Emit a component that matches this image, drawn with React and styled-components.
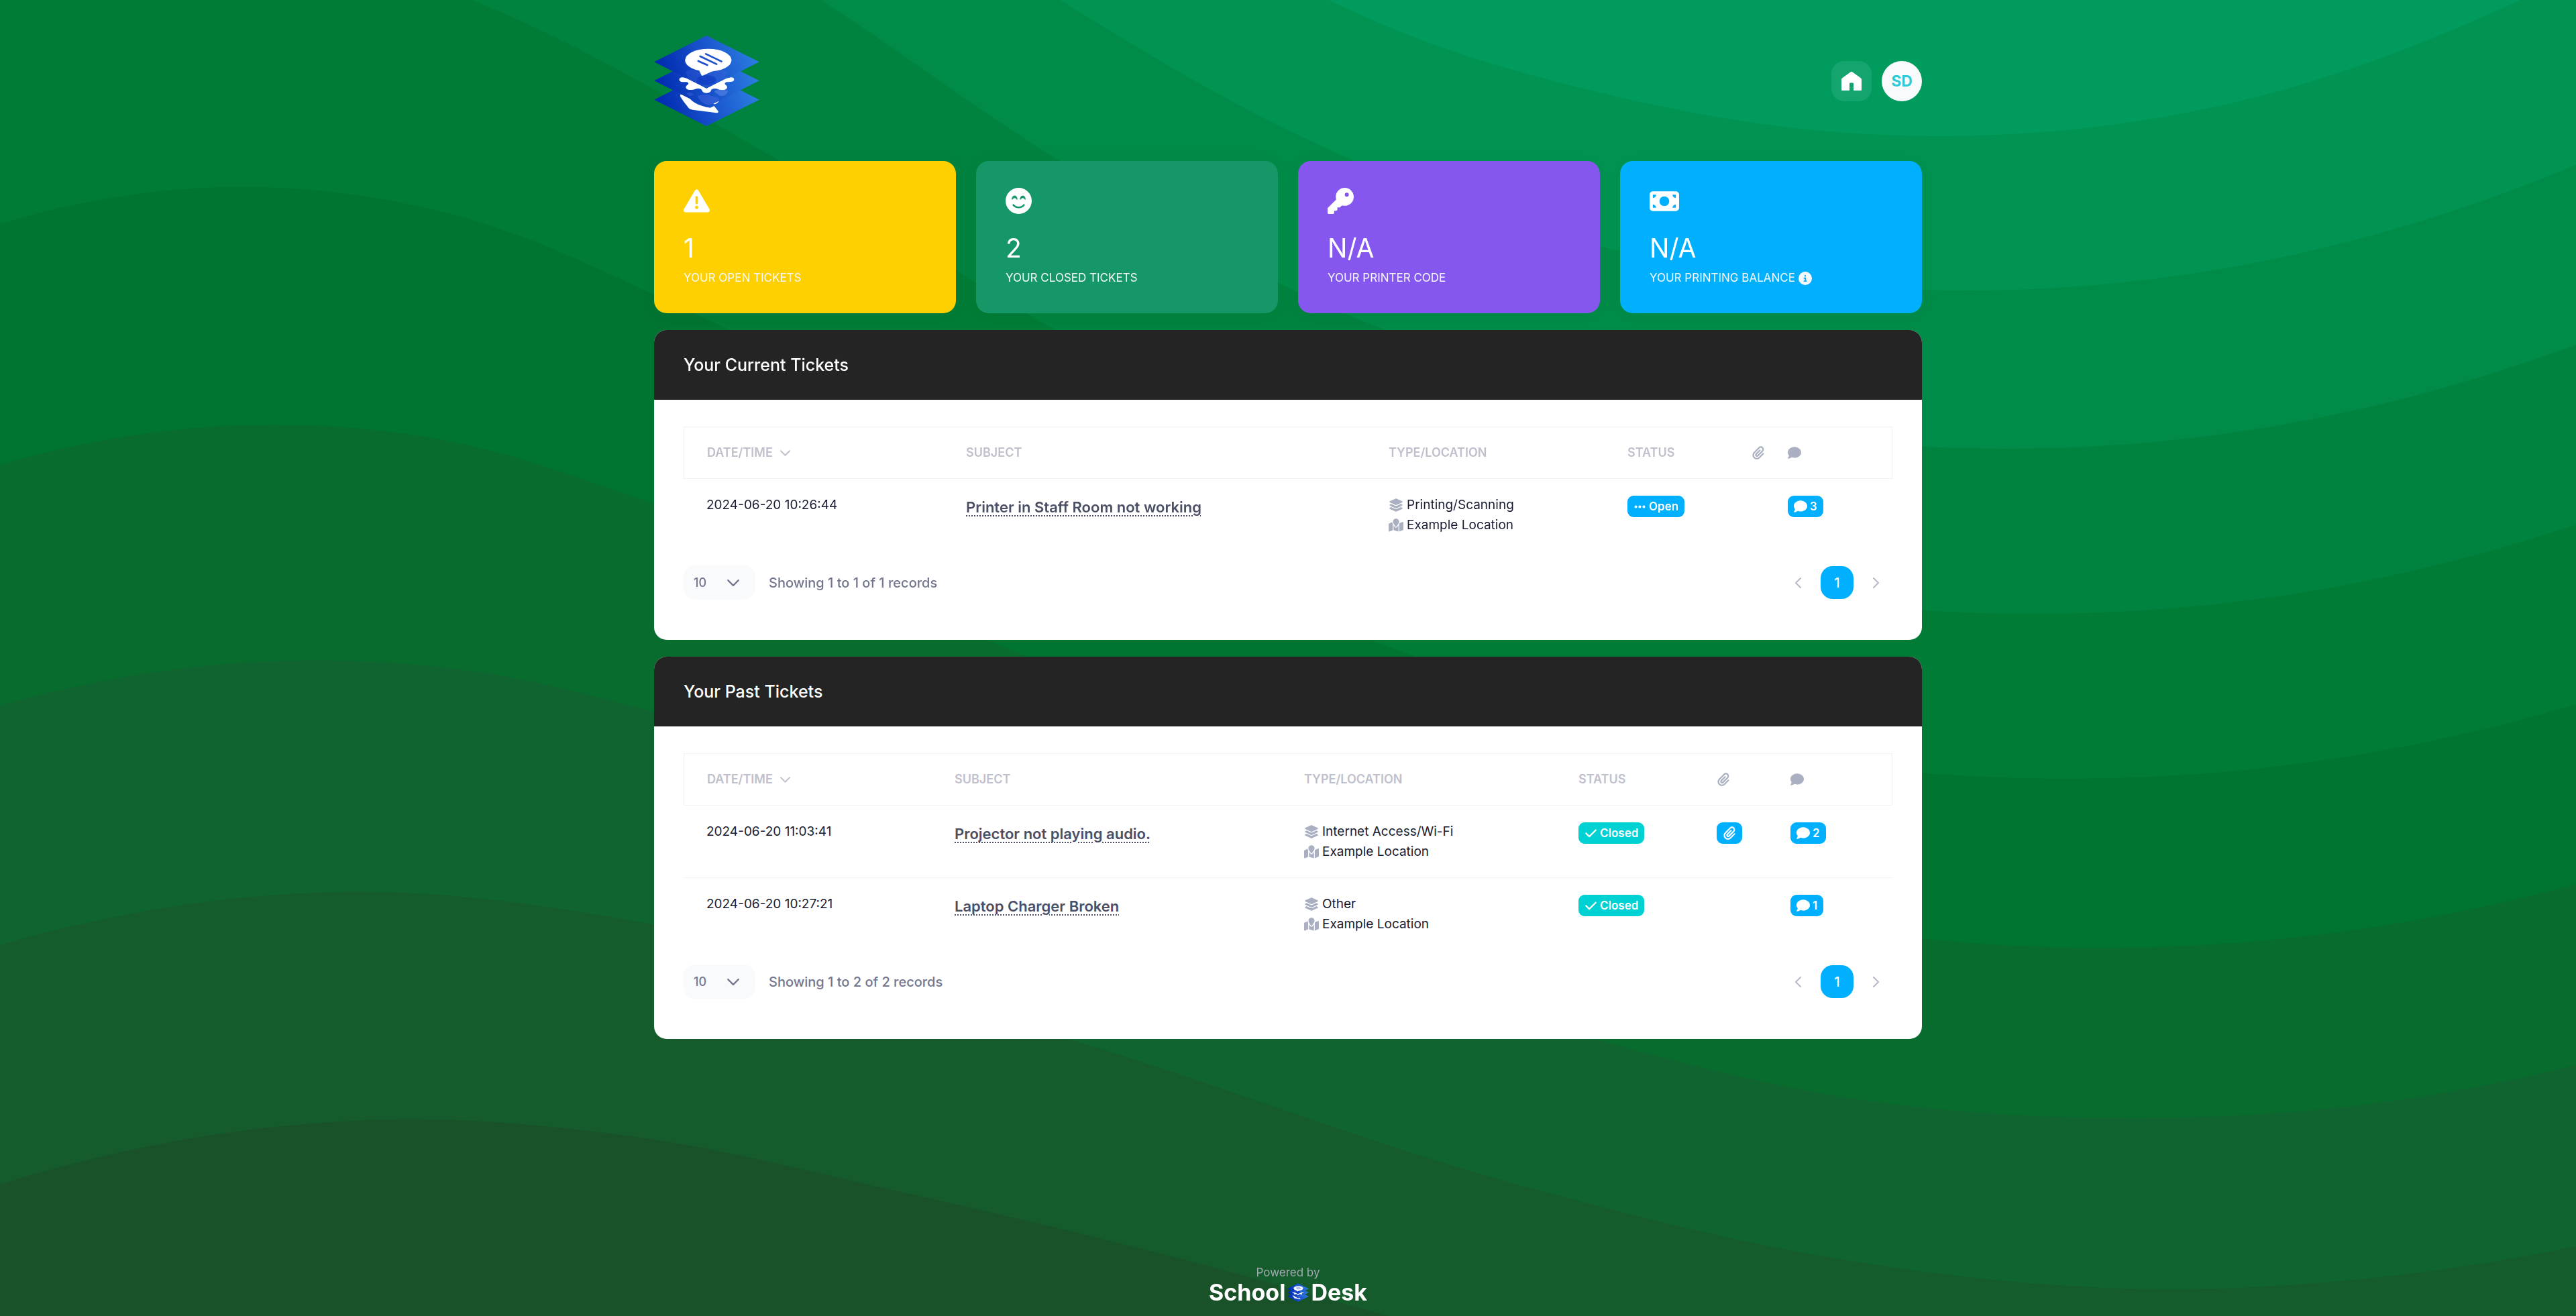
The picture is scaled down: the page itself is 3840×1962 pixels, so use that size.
import React from "react";
import styled, { createGlobalStyle } from "styled-components";
import {
  FaTriangleExclamation,
  FaFaceSmileBeam,
  FaKey,
  FaMoneyBill,
  FaCircleInfo,
  FaLayerGroup,
  FaMapLocation,
  FaPaperclip,
  FaComment,
  FaEllipsis,
  FaCheck,
} from "react-icons/fa6";

const color = {
  blue: "#00b0ff",
  teal: "#00d1d3",
  ink: "#181c32",
  link: "#4b4f66",
  muted: "#72768e",
  heading: "#c0c0cd",
  icon: "#aab0c1",
  line: "#f0f3f7",
  field: "#f8fafc",
};

const GlobalStyle = createGlobalStyle`
  * { box-sizing: border-box; }
  body {
    margin: 0;
    background: #007c37;
    color: ${color.ink};
    font-family: Inter, "Noto Sans", sans-serif;
    font-size: 20px;
    line-height: 30px;
  }
  button, select { font: inherit; }
  svg { display: block; }
`;

const Backdrop = styled.svg`
  position: fixed;
  inset: 0;
  width: 100%;
  height: 100%;
  z-index: -1;
`;

const Page = styled.div`
  display: flex;
  flex-direction: column;
  align-items: center;
  min-height: 100vh;
  padding: 53px 30px 18px;
`;

const Container = styled.main`
  width: 100%;
  max-width: 1890px;
`;

const TopBar = styled.header`
  display: flex;
  align-items: center;
  justify-content: space-between;
  margin-bottom: 52px;
`;

const TopActions = styled.nav`
  display: flex;
  gap: 15px;
`;

const HomeLink = styled.a`
  display: grid;
  place-items: center;
  width: 60px;
  height: 60px;
  border-radius: 19px;
  background: #14a46d;
`;

const Avatar = styled.button`
  width: 60px;
  height: 60px;
  padding: 0;
  border: 0;
  border-radius: 50%;
  background: ${color.field};
  color: #30cbd7;
  font-size: 23px;
  font-weight: 700;
`;

const Stats = styled.section`
  display: grid;
  grid-template-columns: repeat(4, 1fr);
  gap: 30px;
  margin-bottom: 25px;
`;

const StatCard = styled.article`
  height: 227px;
  padding: 40px 44px;
  border-radius: 19px;
  background: ${(p) => p.$tone};
  color: #fff;
  box-shadow: 0 0 30px rgba(0, 0, 0, 0.03);
`;

const Icon = styled.span`
  display: flex;
  align-items: center;
  justify-content: center;
  width: ${(p) => p.$size}px;
  height: ${(p) => p.$height || 20}px;
  color: ${(p) => p.$color || "inherit"};
  svg { flex: none; width: 100%; height: auto; }
`;

const StatValue = styled.div`
  margin-top: 26px;
  font-size: 39px;
  line-height: 50px;
  font-weight: 400;
`;

const StatLabel = styled.div`
  display: flex;
  align-items: center;
  gap: 5px;
  margin-top: 6px;
  color: #f5f8fa;
  font-size: 17px;
  line-height: 27px;
`;

const Panel = styled.section`
  overflow: hidden;
  margin-bottom: 25px;
  border-radius: 19px;
  background: #fff;
`;

const PanelTitle = styled.h2`
  margin: 0;
  padding: 37px 44px;
  background: #242424;
  color: #fff;
  font-size: 25px;
  line-height: 30px;
  font-weight: 500;
`;

const PanelBody = styled.div`
  padding: 40px 44px 60px;
`;

const Table = styled.table`
  width: 100%;
  table-layout: fixed;
  border-collapse: separate;
  border-spacing: 0;
  font-size: 19px;
`;

const HeadCell = styled.th`
  height: 78px;
  padding: 0;
  border: solid ${color.line};
  border-width: 1px 0;
  color: ${color.heading};
  font-size: 18px;
  font-weight: 600;
  text-align: left;
  &:first-child { padding-left: 34px; border-left-width: 1px; }
  &:last-child { border-right-width: 1px; }
`;

const HeadContent = styled.span`
  display: flex;
  align-items: center;
  gap: 11px;
`;

const BodyRow = styled.tr`
  &:not(:last-child) td { border-bottom: 1px solid ${color.line}; }
`;

const Cell = styled.td`
  padding: 24px 0 23px;
  vertical-align: top;
  &:first-child { padding-left: 34px; }
`;

const TicketLink = styled.a`
  display: inline-block;
  padding-top: 3px;
  color: ${color.link};
  font-size: 22px;
  font-weight: 600;
  text-decoration: underline dotted 2px;
  text-underline-offset: 4px;
`;

const Detail = styled.div`
  display: grid;
  grid-template-columns: 22px 1fr;
  gap: 5px;
  align-items: center;
`;

const Badge = styled.span`
  display: inline-flex;
  align-items: center;
  gap: 4px;
  height: 32px;
  padding: 0 9px;
  border-radius: 9px;
  vertical-align: top;
  margin-top: 1px;
  background: ${(p) => p.$tone || color.blue};
  color: #fff;
  font-size: 17px;
  line-height: 17px;
  font-weight: 600;
`;

const PanelFooter = styled.footer`
  display: flex;
  align-items: center;
  gap: 20px;
  margin-top: 22px;
  color: ${color.muted};
  font-weight: 500;
`;

const PageSize = styled.span`
  display: grid;
  align-items: center;
  width: 107px;
  > * { grid-area: 1 / 1; }
  svg { justify-self: end; margin-right: 24px; pointer-events: none; }
`;

const PageSizeSelect = styled.select`
  appearance: none;
  width: 100%;
  height: 51px;
  padding: 0 15px;
  border: 0;
  border-radius: 17px;
  background: ${color.field};
  color: ${color.muted};
  font-size: 18px;
`;

const Pager = styled.nav`
  display: flex;
  gap: 9px;
  margin-left: auto;
`;

const PagerButton = styled.button`
  display: grid;
  place-items: center;
  width: 49px;
  height: 49px;
  padding: 0;
  border: 0;
  border-radius: 18px;
  background: ${(p) => (p.$active ? color.blue : "transparent")};
  color: ${(p) => (p.$active ? "#fff" : "#b8b8c8")};
  font-weight: 500;
`;

const Credit = styled.footer`
  display: flex;
  flex-direction: column;
  align-items: center;
  margin-top: auto;
  color: #a0aab0;
  font-size: 17px;
  line-height: 26px;
`;

const Wordmark = styled.a`
  display: flex;
  align-items: center;
  gap: 3px;
  color: #fff;
  font-size: 34px;
  line-height: 34px;
  font-weight: 700;
  text-decoration: none;
`;

/* Each wave lists the points its upper edge runs through. */
const waves = [
  { fill: "#009352", points: [[1700, -170], [1981, 0], [2410, 144], [2912, 203], [3400, 135], [3757, 0], [3840, -40]] },
  { fill: "#008b48", points: [[1200, -260], [1580, 0], [1920, 194], [2398, 370], [2942, 433], [3400, 384], [3840, 246]] },
  { fill: "#00833f", points: [[900, -200], [1224, 0], [1580, 240], [1990, 461], [2500, 619], [2991, 669], [3420, 630], [3840, 514]] },
  { fill: "#007c37", points: [[300, -120], [704, 0], [1163, 240], [1572, 491], [2160, 772], [2640, 886], [3046, 915], [3440, 882], [3840, 782]] },
  { fill: "#007431", points: [[0, 334], [337, 279], [690, 324], [1030, 465], [1560, 739], [2075, 966], [2600, 1117], [3083, 1161], [3480, 1131], [3840, 1050]] },
  { fill: "#086c2f", points: [[0, 693], [367, 634], [680, 660], [973, 751], [1500, 966], [2080, 1216], [2600, 1361], [3144, 1413], [3500, 1388], [3840, 1318]] },
  { fill: "#10642f", points: [[0, 1052], [435, 985], [720, 1003], [973, 1061], [1650, 1302], [2361, 1545], [2750, 1636], [3200, 1667], [3540, 1645], [3840, 1588]] },
  { fill: "#155b2c", points: [[0, 1409], [502, 1330], [973, 1378], [1592, 1549], [2287, 1773], [2740, 1877], [3230, 1922], [3540, 1905], [3840, 1858]] },
  { fill: "#195229", points: [[0, 1766], [588, 1669], [940, 1694], [1347, 1778], [1780, 1882], [2069, 1962], [2400, 2050], [3840, 2150]] },
];

function wavePath(points) {
  const slope = (a, b) => (b[1] - a[1]) / (b[0] - a[0]);
  const tangents = points.map((p, i) => {
    const prev = points[i - 1];
    const next = points[i + 1];
    if (!prev || !next) return 0;
    const before = p[0] - prev[0];
    const after = next[0] - p[0];
    return (after * slope(prev, p) + before * slope(p, next)) / (before + after);
  });
  const last = points.length - 1;
  tangents[0] = 2 * slope(points[0], points[1]) - tangents[1];
  tangents[last] = 2 * slope(points[last - 1], points[last]) - tangents[last - 1];
  let d = `M${points[0][0]} ${points[0][1]}`;
  for (let i = 1; i < points.length; i += 1) {
    const [x0, y0] = points[i - 1];
    const [x1, y1] = points[i];
    const third = (x1 - x0) / 3;
    d += ` C${x0 + third} ${y0 + tangents[i - 1] * third} ${x1 - third} ${y1 - tangents[i] * third} ${x1} ${y1}`;
  }
  return `${d} V2200 H0 V${points[0][1]} Z`;
}

function Waves() {
  return (
    <Backdrop viewBox="0 0 3840 1962" preserveAspectRatio="none" aria-hidden="true">
      <rect width="3840" height="1962" fill="#009b5d" />
      {waves.map((w) => (
        <path key={w.fill} d={wavePath(w.points)} fill={w.fill} />
      ))}
    </Backdrop>
  );
}

function Logo({ id, width, height }) {
  const tile = `url(#${id})`;
  return (
    <svg width={width} height={height} viewBox="46 39 470 405" role="img" aria-label="SchoolDesk logo">
      <defs>
        <linearGradient id={id} x1="0" y1="0.6" x2="1" y2="0.4">
          <stop offset="0.05" stopColor="#002bb0" />
          <stop offset="0.5" stopColor="#1852cb" />
          <stop offset="1" stopColor="#2c80e2" />
        </linearGradient>
      </defs>
      <path d="M280 208 516 326 280 444 46 326Z" fill={tile} />
      <path d="M162 303 170 302 204 319C215 335 245 352 275 358L296 362 314 354 333 378C334 383 330 385 324 385L218 371C205 368 200 364 195 356C180 338 166 318 162 308Z" fill="#fff" />
      <path d="M308 345 337 331C332 338 326 344 318 346Z" fill="#fff" />
      <path d="M280 123 516 241 280 359 46 241Z" fill={tile} />
      <path d="M240 308C262 300 300 302 338 322L326 336 290 352C266 344 248 330 240 308Z" fill="#6a7df0" opacity=".28" />
      <path d="M314 290C326 278 362 274 376 288C372 304 352 312 340 308Z" fill="#7d9bf0" opacity=".4" />
      <path d="M190 300C200 290 215 292 224 304L206 311Z" fill="#6a7df0" opacity=".25" />
      <path d="M172 226C154 226 153 246 172 247C186 247 197 245 199 253C200 260 186 262 188 272C191 284 214 284 228 279C241 273 258 275 260 285C264 300 296 300 300 285C302 275 319 273 332 279C346 284 369 284 372 272C374 262 361 260 362 253C364 245 376 247 390 246C408 245 408 226 390 226C381 226 378 233 362 228L280 275 198 228C186 232 182 226 172 226Z" fill="#fff" />
      <path d="M280 39 516 157 280 275 46 157Z" fill={tile} />
      <path d="M188 206C188 192 214 188 230 194H330C346 188 372 192 372 206C372 216 362 216 364 228L280 272 198 232C200 218 188 216 188 206Z" fill="#6a7df0" opacity=".16" />
      <ellipse cx="280" cy="238" rx="44" ry="22" fill="#0a35bd" opacity=".55" />
      <ellipse cx="288" cy="149" rx="104" ry="51" fill="#fff" />
      <path d="M245 190 257 215Q260 221 267 217L308 198Z" fill="#fff" />
      <path d="M277 121 347 155M252 132 325 167M243 153 284 171" stroke="#1d4fca" strokeWidth="8" strokeLinecap="round" />
    </svg>
  );
}

function Chevron({ width, height, direction = "down" }) {
  const paths = { down: "M1 1 8 8 15 1", left: "M8 1 1 8 8 15", right: "M1 1 8 8 1 15" };
  const box = direction === "down" ? "0 0 16 9" : "0 0 9 16";
  return (
    <svg width={width} height={height} viewBox={box} fill="none" stroke="currentColor" strokeWidth="2" strokeLinecap="round" strokeLinejoin="round" aria-hidden="true">
      <path d={paths[direction]} />
    </svg>
  );
}

const stats = [
  { tone: "#ffd000", icon: <FaTriangleExclamation />, size: 39, value: "1", label: "YOUR OPEN TICKETS" },
  { tone: "#159767", icon: <FaFaceSmileBeam />, size: 39, value: "2", label: "YOUR CLOSED TICKETS" },
  { tone: "#8557ef", icon: <FaKey />, size: 39, value: "N/A", label: "YOUR PRINTER CODE" },
  { tone: color.blue, icon: <FaMoneyBill />, size: 44, value: "N/A", label: "YOUR PRINTING BALANCE", info: true },
];

const currentTickets = [
  { date: "2024-06-20 10:26:44", subject: "Printer in Staff Room not working", type: "Printing/Scanning", status: "Open", comments: 3 },
];

const pastTickets = [
  { date: "2024-06-20 11:03:41", subject: "Projector not playing audio.", type: "Internet Access/Wi-Fi", status: "Closed", attachment: true, comments: 2 },
  { date: "2024-06-20 10:27:21", subject: "Laptop Charger Broken", type: "Other", status: "Closed", comments: 1 },
];

function TicketPanel({ title, widths, tickets, summary }) {
  return (
    <Panel>
      <PanelTitle>{title}</PanelTitle>
      <PanelBody>
        <Table>
          <colgroup>
            {widths.map((w, i) => (
              <col key={i} width={w} />
            ))}
            <col />
          </colgroup>
          <thead>
            <tr>
              <HeadCell>
                <HeadContent>
                  DATE/TIME
                  <Chevron width={15} height={9} />
                </HeadContent>
              </HeadCell>
              <HeadCell>SUBJECT</HeadCell>
              <HeadCell>TYPE/LOCATION</HeadCell>
              <HeadCell>STATUS</HeadCell>
              <HeadCell aria-label="Attachments">
                <Icon $size={20} $color={color.icon}><FaPaperclip /></Icon>
              </HeadCell>
              <HeadCell aria-label="Comments">
                <Icon $size={20} $color={color.icon}><FaComment /></Icon>
              </HeadCell>
            </tr>
          </thead>
          <tbody>
            {tickets.map((t) => (
              <BodyRow key={t.date}>
                <Cell>{t.date}</Cell>
                <Cell><TicketLink href="#ticket">{t.subject}</TicketLink></Cell>
                <Cell>
                  <Detail><Icon $size={22} $color={color.icon}><FaLayerGroup /></Icon>{t.type}</Detail>
                  <Detail><Icon $size={22} $color={color.icon}><FaMapLocation /></Icon>Example Location</Detail>
                </Cell>
                <Cell>
                  {t.status === "Open" ? (
                    <Badge><Icon $size={19}><FaEllipsis /></Icon>Open</Badge>
                  ) : (
                    <Badge $tone={color.teal}><Icon $size={19}><FaCheck /></Icon>Closed</Badge>
                  )}
                </Cell>
                <Cell>{t.attachment && <Badge><Icon $size={20}><FaPaperclip /></Icon></Badge>}</Cell>
                <Cell><Badge><Icon $size={20}><FaComment /></Icon>{t.comments}</Badge></Cell>
              </BodyRow>
            ))}
          </tbody>
        </Table>
        <PanelFooter>
          <PageSize>
            <PageSizeSelect aria-label={`${title} per page`} defaultValue="10">
              <option>10</option>
              <option>25</option>
              <option>50</option>
            </PageSizeSelect>
            <Chevron width={18} height={10} />
          </PageSize>
          <span>{summary}</span>
          <Pager aria-label={`${title} pages`}>
            <PagerButton aria-label="Previous page"><Chevron direction="left" width={9} height={16} /></PagerButton>
            <PagerButton $active>1</PagerButton>
            <PagerButton aria-label="Next page"><Chevron direction="right" width={9} height={16} /></PagerButton>
          </Pager>
        </PanelFooter>
      </PanelBody>
    </Panel>
  );
}

export default function App() {
  return (
    <>
      <GlobalStyle />
      <Waves />
      <Page>
        <Container>
          <TopBar>
            <Logo id="brand" width={157} height={135} />
            <TopActions>
              <HomeLink href="#home" aria-label="Home">
                <svg width="30" height="28" viewBox="0 0 30 28" fill="#fff" aria-hidden="true">
                  <path d="M13.400.5Q15-.4 16.600.5L29 9.500Q30 10.300 30 11.500V27Q30 28 29 28H19Q18 28 18 27V17.500Q18 16.500 17 16.500H13Q12 16.500 12 17.500V27Q12 28 11 28H1Q0 28 0 27V11.500Q0 10.300 1 9.500Z" />
                </svg>
              </HomeLink>
              <Avatar>SD</Avatar>
            </TopActions>
          </TopBar>
          <Stats>
            {stats.map((s) => (
              <StatCard key={s.label} $tone={s.tone}>
                <Icon $size={s.size} $height={39}>{s.icon}</Icon>
                <StatValue>{s.value}</StatValue>
                <StatLabel>
                  {s.label}
                  {s.info && <Icon $size={20}><FaCircleInfo /></Icon>}
                </StatLabel>
              </StatCard>
            ))}
          </Stats>
          <TicketPanel
            title="Your Current Tickets"
            widths={[421, 630, 356, 185, 54]}
            tickets={currentTickets}
            summary="Showing 1 to 1 of 1 records"
          />
          <TicketPanel
            title="Your Past Tickets"
            widths={[404, 521, 409, 206, 110]}
            tickets={pastTickets}
            summary="Showing 1 to 2 of 2 records"
          />
        </Container>
        <Credit>
          Powered by
          <Wordmark href="#schooldesk">
            School
            <Logo id="brand-small" width={32} height={28} />
            Desk
          </Wordmark>
        </Credit>
      </Page>
    </>
  );
}
